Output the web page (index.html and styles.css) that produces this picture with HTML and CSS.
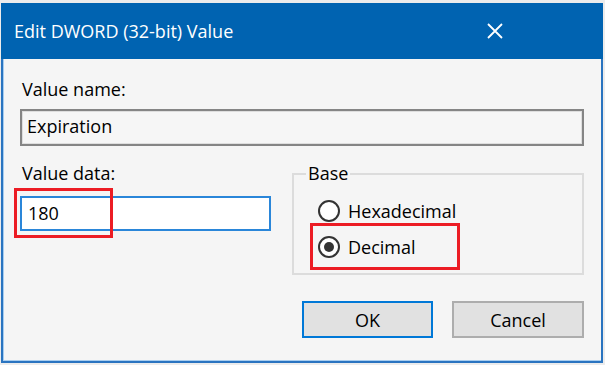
FILE: index.html
```html
<!DOCTYPE html>
<html lang="en">
<head>
    <meta charset="UTF-8">
    <title>Edit DWORD (32-bit) Value</title>
    <link rel="stylesheet" href="styles.css">
</head>
<body>
<div class="window">
    <div class="titlebar">
        <span class="title">Edit DWORD (32-bit) Value</span>
        <svg class="close" width="16" height="16" viewBox="0 0 16 16">
            <path d="M1 1L15 15M15 1L1 15" stroke="#fff" stroke-width="1.8" fill="none"/>
        </svg>
    </div>
    <div class="client">
        <div class="label">Value name:</div>
        <div class="field readonly">Expiration</div>
        <div class="row">
            <div class="data">
                <div class="label">Value data:</div>
                <div class="field edit">180<span class="mark mark-data"></span></div>
            </div>
            <fieldset class="base">
                <legend>Base</legend>
                <div class="options">
                    <label class="radio"><span class="dot"></span>Hexadecimal</label>
                    <label class="radio checked"><span class="dot"></span>Decimal<span class="mark mark-decimal"></span></label>
                </div>
            </fieldset>
        </div>
        <div class="buttons">
            <button class="btn default">OK</button>
            <button class="btn">Cancel</button>
        </div>
    </div>
</div>
</body>
</html>
```

FILE: styles.css
```css
*{
    margin: 0;
    padding: 0;
    box-sizing: border-box;
}
body{
    background: #ececec;
    font-family: "Open Sans", "Noto Sans", sans-serif;
    font-size: 18px;
    color: #000;
}
.window{
    width: 602px;
    height: 360px;
    margin: 3px 0 0 1px;
    background: #2a74c0;
    display: flex;
    flex-direction: column;
}
.titlebar{
    height: 56px;
    background: #0063b1;
    color: #fff;
    display: flex;
    align-items: center;
    justify-content: space-between;
    padding: 0 100px 0 13px;
}
.title{
    font-size: 18px;
}
.close{
    display: block;
}
.client{
    height: 302px;
    margin: 0 2px;
    background: #f5f5f5;
    box-shadow: inset 1px -1px 0 #a8cdef;
    padding: 18px 17px 0;
}
.label{
    height: 25px;
    line-height: 25px;
    padding-left: 2px;
}
.field{
    position: relative;
    line-height: 31px;
}
.readonly{
    height: 37px;
    margin-top: 7px;
    border: 2px solid #858585;
    box-shadow: inset 0 0 0 1px #dedede;
    background: #f6f6f6;
    padding-left: 5px;
}
.row{
    display: flex;
    justify-content: space-between;
    margin-top: 15px;
}
.data{
    width: 251px;
}
.edit{
    height: 35px;
    margin-top: 10px;
    border: 2px solid #2a86d9;
    background: #fff;
    padding-left: 6px;
}
.mark{
    position: absolute;
    border: 3px solid #ec1c24;
}
.mark-data{
    left: -8px;
    top: -10px;
    width: 99px;
    height: 50px;
}
.base{
    width: 292px;
    border: 2px solid #dcdcdc;
}
.base legend{
    margin-left: 12px;
    padding: 0 2px;
    line-height: 25px;
}
.options{
    padding: 7px 0 8px 24px;
}
.radio{
    position: relative;
    height: 36px;
    display: flex;
    align-items: center;
    gap: 8px;
}
.dot{
    width: 22px;
    height: 22px;
    border: 2px solid #333;
    border-radius: 50%;
    background: #fff;
    display: flex;
    align-items: center;
    justify-content: center;
}
.checked .dot::after{
    content: "";
    width: 10px;
    height: 10px;
    border-radius: 50%;
    background: #333;
}
.mark-decimal{
    left: -8px;
    top: -6px;
    width: 150px;
    height: 47px;
}
.buttons{
    display: flex;
    justify-content: flex-end;
    gap: 19px;
    margin-top: 26px;
}
.btn{
    width: 132px;
    height: 37px;
    font-family: inherit;
    font-size: 18px;
    color: #000;
    background: #e1e1e1;
    border: 2px solid #adadad;
}
.btn.default{
    width: 131px;
    border-color: #0078d7;
}
```
